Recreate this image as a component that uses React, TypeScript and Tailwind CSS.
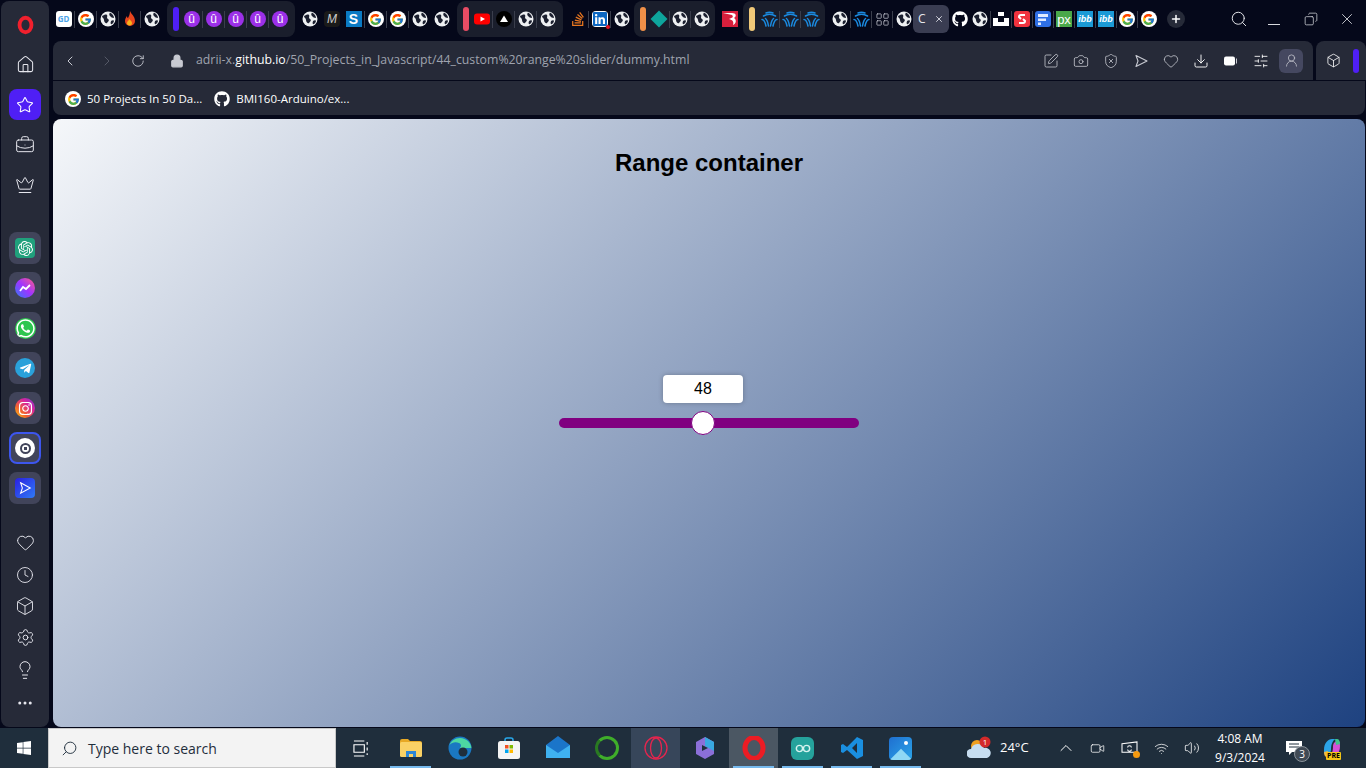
import type { ReactNode } from 'react';
import {
  House, Star, BriefcaseBusiness, Crown, Heart, Clock, Box, Settings, Lightbulb, Ellipsis,
  ChevronLeft, ChevronRight, ChevronUp, RotateCw, Lock, Search, X, Copy, SquarePen, Camera,
  ShieldX, Download, SlidersHorizontal, UserRound, LayoutGrid, Plus, Video, Wifi, Volume2,
} from 'lucide-react';
import { FcGoogle } from 'react-icons/fc';
import {
  FaGithub, FaWhatsapp, FaStackOverflow, FaWindows, FaTelegramPlane, FaInstagram, FaLinkedin,
} from 'react-icons/fa';
import { SiOpenai } from 'react-icons/si';

const ui = "font-['Open_Sans',sans-serif]";

function Globe() {
  return (
    <svg viewBox="0 0 16 16" className="w-4 h-4">
      <circle cx="8" cy="8" r="7.5" fill="#eef0f2" />
      <path fill="#1c2030" d="M2 5c2-1 4-2 5-1s-1 3 1 4 0 3-1 4-3-1-3-3-2-2-2-4zM10 1.500c2 1 4 3 4 5.500-2 0-3-1-4-2s-1-2 0-3.500zM11 10c1-1 3-1 3 0s-2 4-3 3 0-2 0-3z" />
    </svg>
  );
}

function G() {
  return (
    <span className="w-4 h-4 rounded-full bg-white flex items-center justify-center">
      <FcGoogle size={13} />
    </span>
  );
}

function Uicon() {
  return (
    <span className="w-4 h-4 rounded-full bg-[#9b30e8] flex items-center justify-center text-white text-[12px] leading-none font-['Liberation_Sans',sans-serif]">
      û
    </span>
  );
}

function Fan() {
  return (
    <svg viewBox="0 0 17 17" className="w-[17px] h-[17px]" fill="none" stroke="#1a8ae0" strokeWidth="1.500" strokeLinecap="round">
      <path d="M5 2q3.500-1.500 7 0M2.500 5q6-3.500 12 0M1 8.500q2.500 0 4 6.500M16 8.500q-2.500 0-4 6.500M4.500 7.500q2 1.500 3 7.500M12.500 7.500q-2 1.500-3 7.500" />
    </svg>
  );
}

function Tile({ className, children }: { className: string; children: ReactNode }) {
  return <span className={`w-4 h-4 flex items-center justify-center leading-none ${className}`}>{children}</span>;
}

function Slot({ children, w = 'w-[22px]', sep = true }: { children: ReactNode; w?: string; sep?: boolean }) {
  return (
    <div className={`${w} h-[17px] flex items-center justify-center shrink-0 ${sep ? 'border-r border-[#3a3e4c]' : ''}`}>
      {children}
    </div>
  );
}

function Group({ pill, ml, pr, children }: { pill: string; ml: string; pr: string; children: ReactNode }) {
  return (
    <div className={`h-[36px] rounded-lg bg-[#1a1e2c] flex items-center pl-[6px] shrink-0 ${ml} ${pr}`}>
      <span className={`w-[6px] h-6 rounded-full ${pill}`} />
      {children}
    </div>
  );
}

function TabStrip() {
  return (
    <div className="h-[41px] pb-[3px] flex items-center text-white shrink-0">
      <Slot><Tile className="bg-white rounded-[3px]"><span className="text-[#4da3e8] text-[8px] font-bold">GD</span></Tile></Slot>
      <Slot><G /></Slot>
      <Slot><Globe /></Slot>
      <Slot>
        <svg viewBox="0 0 16 16" className="w-4 h-4">
          <path fill="#e8451e" d="M8 0c1 3 5 5 5 10a5 5 0 0 1-10 0c0-2 1-4 2-5 0 2 1 2 1 2 1-2 2-4 2-7z" />
          <path fill="#f6b21b" d="M7 8c1 1 3 2 3 4a2.500 2.500 0 0 1-5 0c0-2 2-2 2-4z" />
        </svg>
      </Slot>
      <Slot sep={false}><Globe /></Slot>
      <Group pill="bg-[#4f1ff5] mr-[2px]" ml="ml-1" pr="pr-1">
        <Slot><Uicon /></Slot>
        <Slot><Uicon /></Slot>
        <Slot><Uicon /></Slot>
        <Slot><Uicon /></Slot>
        <Slot sep={false}><Uicon /></Slot>
      </Group>
      <div className="ml-1 flex items-center">
        <Slot sep={false}><Globe /></Slot>
        <Slot sep={false}><Tile className="bg-[#1a1a1a] rounded-sm"><span className="text-[#ccc] text-[12px] italic font-['Liberation_Sans',sans-serif]">M</span></Tile></Slot>
        <Slot><Tile className="bg-[#0b7ac4]"><span className="text-white text-[14px] font-bold font-['Liberation_Sans',sans-serif]">S</span></Tile></Slot>
        <Slot><G /></Slot>
        <Slot><G /></Slot>
        <Slot sep={false}><Globe /></Slot>
        <Slot sep={false}><Globe /></Slot>
      </div>
      <Group pill="bg-[#e84c64] mr-[2px]" ml="ml-1" pr="pr-1">
        <Slot>
          <svg viewBox="0 0 16 16" className="w-4 h-4">
            <rect y="2.500" width="16" height="11" rx="3" fill="#f00" />
            <path d="M6.500 5.500v5L11 8z" fill="#fff" />
          </svg>
        </Slot>
        <Slot>
          <svg viewBox="0 0 16 16" className="w-4 h-4">
            <circle cx="8" cy="8" r="8" fill="#000" />
            <path d="M8 4.500l4 6.500H4z" fill="#fff" />
          </svg>
        </Slot>
        <Slot><Globe /></Slot>
        <Slot sep={false}><Globe /></Slot>
      </Group>
      <div className="ml-1 flex items-center">
        <Slot><FaStackOverflow size={16} className="text-[#e8761f]" /></Slot>
        <Slot><span className="relative flex"><FaLinkedin size={16} className="text-[#0a66c2] bg-white rounded-sm" /><span className="absolute -right-0.5 -bottom-0.5 w-1 h-1 rounded-full bg-[#e01020]" /></span></Slot>
        <Slot w="w-[21px]" sep={false}><Globe /></Slot>
      </div>
      <Group pill="bg-[#f09048] mr-[2px]" ml="ml-[2px]" pr="pr-[3px]">
        <Slot><span className="w-3 h-3 rotate-45 bg-[#0ea59c]" /></Slot>
        <Slot w="w-[21px]"><Globe /></Slot>
        <Slot w="w-[21px]" sep={false}><Globe /></Slot>
      </Group>
      <div className="ml-1 flex items-center">
        <Slot sep={false}>
          <svg viewBox="0 0 16 16" className="w-4 h-4">
            <rect width="16" height="16" fill="#d81f3c" />
            <path d="M1 2h9c4 0 5 3 2 5 3 2 2 6-1 7 1-3 0-5-4-6 3-1 5-2 3-4z" fill="#fff" />
          </svg>
        </Slot>
      </div>
      <Group pill="bg-[#f0c878] mr-[4px]" ml="ml-[2px]" pr="pr-[3px]">
        <Slot w="w-[21px]"><Fan /></Slot>
        <Slot w="w-[21px]"><Fan /></Slot>
        <Slot w="w-[21px]" sep={false}><Fan /></Slot>
      </Group>
      <div className="ml-[5px] flex items-center">
        <Slot w="w-[21px]"><Globe /></Slot>
        <Slot w="w-[21px]"><Fan /></Slot>
        <Slot w="w-[21px]"><LayoutGrid size={15} strokeWidth={1.200} className="text-[#c4c6d0]" /></Slot>
        <Slot w="w-[21px]" sep={false}><Globe /></Slot>
      </div>
      <div className={`w-[36px] h-7 ml-[-1px] rounded-md bg-[#3a3d52] flex items-center justify-between px-[5px] text-[#e6e7ee] text-[12px] ${ui}`}>
        <span>C</span>
        <X size={10} />
      </div>
      <div className="flex items-center">
        <Slot w="w-[21px]" sep={false}><FaGithub size={16} className="text-white" /></Slot>
        <Slot w="w-[21px]"><Globe /></Slot>
        <Slot w="w-[21px]">
          <svg viewBox="0 0 16 16" className="w-4 h-4" fill="#fff"><path d="M5 1h6v4H5zM0 7h5v4h6V7h5v8H0z" /></svg>
        </Slot>
        <Slot w="w-[21px]">
          <svg viewBox="0 0 16 16" className="w-4 h-4">
            <rect width="16" height="16" rx="3" fill="#f0333f" />
            <path d="M11 4H7a2 2 0 0 0-2 2l2 2M5 12h4a2 2 0 0 0 2-2L9 8" fill="none" stroke="#fff" strokeWidth="2" />
          </svg>
        </Slot>
        <Slot w="w-[21px]">
          <svg viewBox="0 0 16 16" className="w-4 h-4">
            <rect width="16" height="16" rx="3" fill="#2f6fe4" />
            <path d="M3 3h10v3H3zM3 7.500h8v2.500H3zM3 11.500h3V14H3z" fill="#dfeaff" />
          </svg>
        </Slot>
        <Slot w="w-[21px]"><Tile className="bg-[#4aa84a]"><span className="text-white text-[13px] font-['Liberation_Sans',sans-serif]">px</span></Tile></Slot>
        <Slot w="w-[21px]"><Tile className="bg-[#1b9ad6]"><span className="text-white text-[9px] italic font-bold font-['Liberation_Sans',sans-serif]">ibb</span></Tile></Slot>
        <Slot w="w-[21px]"><Tile className="bg-[#1b9ad6]"><span className="text-white text-[9px] italic font-bold font-['Liberation_Sans',sans-serif]">ibb</span></Tile></Slot>
        <Slot w="w-[21px]"><G /></Slot>
        <Slot w="w-[21px]" sep={false}><G /></Slot>
      </div>
      <span className="ml-[8px] w-[18px] h-[18px] rounded-full bg-[#262a38] flex items-center justify-center">
        <Plus size={12} strokeWidth={3} />
      </span>
      <div className="flex-1" />
      <Search size={18} strokeWidth={1.300} className="mr-[20px] text-[#e4e5ea]" />
      <span className="w-3 h-px mr-[24px] bg-[#d8d9de] translate-y-[5px]" />
      <Copy size={14} strokeWidth={1.200} className="mr-[20px] text-[#e4e5ea] -scale-x-100" />
      <X size={18} strokeWidth={1.100} className="mr-[10px] text-[#e4e5ea]" />
    </div>
  );
}

function AddressBar() {
  return (
    <div className="h-[39px] flex gap-[3px] shrink-0 text-[#c8cad2]">
      <div className="w-[1260px] bg-[#262a38] rounded-t-lg flex items-center">
        <ChevronLeft size={16} strokeWidth={1.500} className="ml-[9px]" />
        <ChevronRight size={16} strokeWidth={1.500} className="ml-[21px] text-[#555967]" />
        <RotateCw size={14} strokeWidth={1.500} className="ml-[16px]" />
        <Lock size={14} fill="#c8cad2" className="ml-[25px] text-[#c8cad2]" />
        <p className={`ml-[12px] text-[12.300px] whitespace-nowrap text-[#9fa3ae] ${ui}`}>
          adrii-x.<span className="text-white">github.io</span>/50_Projects_in_Javascript/44_custom%20range%20slider/dummy.html
        </p>
        <div className="flex-1" />
        <div className="flex items-center gap-[14px]">
          <SquarePen size={16} strokeWidth={1.200} />
          <Camera size={16} strokeWidth={1.200} />
          <ShieldX size={16} strokeWidth={1.200} />
          <svg viewBox="0 0 16 16" className="w-4 h-4" fill="none" stroke="currentColor" strokeWidth="1.100" strokeLinejoin="round">
            <path d="M3 2.500L14 8 3 13.500 5 8z" />
          </svg>
          <Heart size={16} strokeWidth={1.200} />
          <Download size={16} strokeWidth={1.400} className="text-white" />
          <svg viewBox="0 0 16 16" className="w-4 h-4">
            <rect x="1" y="3.500" width="11" height="9" rx="2" fill="#fff" />
            <path d="M13 5.500h1v5h-1z" fill="#c8cad2" />
          </svg>
          <SlidersHorizontal size={16} strokeWidth={1.300} className="text-white" />
        </div>
        <div className="w-6 h-6 ml-[10px] mr-[10px] rounded-md bg-[#454860] flex items-center justify-center">
          <UserRound size={15} strokeWidth={1.200} />
        </div>
      </div>
      <div className="flex-1 bg-[#262a38] rounded-t-lg flex items-center pl-[10px]">
        <Box size={15} strokeWidth={1.300} className="text-white" />
        <span className="ml-[12px] w-[6px] h-6 rounded-full bg-[#4f1ff5]" />
      </div>
    </div>
  );
}

function Bookmarks() {
  return (
    <div className={`mt-px h-[34px] pt-[2px] mr-px bg-[#262a38] rounded-b-lg flex items-center pl-3 text-[11.500px] text-white shrink-0 ${ui}`}>
      <span className="w-4 h-4 rounded-full bg-white flex items-center justify-center"><FcGoogle size={13} /></span>
      <span className="ml-[6px]">50 Projects In 50 Da...</span>
      <FaGithub size={16} className="ml-[12px]" />
      <span className="ml-[6px]">BMI160-Arduino/ex...</span>
    </div>
  );
}

function RangeSlider() {
  const value = 48;
  return (
    <div className="relative w-[300px] h-[10px] rounded-[5px] bg-[#800080]">
      <div
        className="absolute bottom-[25px] w-20 h-7 -translate-x-1/2 rounded bg-white shadow-[0_0_5px_rgba(0,0,0,0.25)] flex items-center justify-center text-base text-black"
        style={{ left: `${value}%` }}
      >
        {value}
      </div>
      <div
        className="absolute top-1/2 w-6 h-6 -translate-x-1/2 -translate-y-1/2 rounded-full bg-white border border-[#800080]"
        style={{ left: `${value}%` }}
      />
    </div>
  );
}

function Page() {
  return (
    <main className="flex-1 mt-1 mr-px rounded-lg bg-[linear-gradient(135deg,#f5f7fa,#1e4280)] grid grid-rows-[1fr_auto_1fr] justify-items-center font-['Liberation_Sans',sans-serif]">
      <h1 className="pt-[30px] text-2xl leading-7 font-bold text-black">Range container</h1>
      <RangeSlider />
      <div />
    </main>
  );
}

function SideTile({ children, className = '' }: { children: ReactNode; className?: string }) {
  return <div className={`w-8 h-8 rounded-lg bg-[#41445a] flex items-center justify-center shrink-0 ${className}`}>{children}</div>;
}

function Sidebar() {
  const line = 'text-[#e6e7ee] shrink-0';
  return (
    <aside className="w-[48px] h-[726px] mt-px ml-px mr-[4px] bg-[#262a38] rounded-lg flex flex-col items-center shrink-0">
      <svg viewBox="0 0 20 20" className="w-[17px] h-[20px] mt-[14px] shrink-0">
        <ellipse cx="10" cy="10" rx="7" ry="8.500" fill="none" stroke="#f0202d" strokeWidth="4.500" />
      </svg>
      <House size={19} strokeWidth={1.300} className={`${line} mt-[20px]`} />
      <div className="w-8 h-[31px] mt-[15px] rounded-lg bg-[#4f1ff5] flex items-center justify-center shrink-0">
        <Star size={18} strokeWidth={1.400} className="text-white" />
      </div>
      <BriefcaseBusiness size={20} strokeWidth={1.200} className={`${line} mt-[15px]`} />
      <Crown size={20} strokeWidth={1.200} className={`${line} mt-[20px]`} />
      <SideTile className="mt-[37px]">
        <span className="w-5 h-5 rounded bg-[#20a07c] flex items-center justify-center"><SiOpenai size={15} className="text-white" /></span>
      </SideTile>
      <SideTile className="mt-2">
        <span className="w-5 h-5 rounded-full bg-[linear-gradient(45deg,#2f7bf6,#a033ff,#ff5c87)] flex items-center justify-center">
          <svg viewBox="0 0 12 8" className="w-3 h-2" fill="none" stroke="#fff" strokeWidth="1.800"><path d="M1 7l3-4 3 2 4-4" /></svg>
        </span>
      </SideTile>
      <SideTile className="mt-2">
        <FaWhatsapp size={21} className="text-white bg-[#2dc64f] rounded-full" />
      </SideTile>
      <SideTile className="mt-2">
        <span className="w-5 h-5 rounded-full bg-[#2aa1da] flex items-center justify-center"><FaTelegramPlane size={13} className="text-white" /></span>
      </SideTile>
      <SideTile className="mt-2">
        <span className="w-5 h-5 rounded-full bg-[linear-gradient(45deg,#fdc70c,#f3632f,#d6249f,#7a3bd6)] flex items-center justify-center"><FaInstagram size={15} className="text-white" /></span>
      </SideTile>
      <SideTile className="mt-2 border-2 border-[#3d56ee]">
        <span className="w-5 h-5 rounded-full bg-white flex items-center justify-center">
          <span className="w-[11px] h-[11px] rounded-full border-2 border-[#41445a] flex items-center justify-center"><span className="w-[3px] h-[3px] bg-[#41445a]" /></span>
        </span>
      </SideTile>
      <SideTile className="mt-2">
        <span className="w-5 h-5 rounded bg-[linear-gradient(135deg,#2a1fe0,#2f7bf6)] flex items-center justify-center">
          <svg viewBox="0 0 16 16" className="w-3.5 h-3.5" fill="none" stroke="#fff" strokeWidth="1.200"><path d="M3 2l11 6-11 6 2-6z" /></svg>
        </span>
      </SideTile>
      <Heart size={19} strokeWidth={1.200} className={`${line} mt-[29px]`} />
      <Clock size={18} strokeWidth={1.200} className={`${line} mt-[14px]`} />
      <Box size={20} strokeWidth={1.100} className={`${line} mt-[12px]`} />
      <Settings size={19} strokeWidth={1.200} className={`${line} mt-[12px]`} />
      <Lightbulb size={20} strokeWidth={1.200} className={`${line} mt-[13px]`} />
      <Ellipsis size={18} className={`${line} mt-[14px]`} />
    </aside>
  );
}

function TaskIcon({ children, w = 'w-[49px]', active = '', open = false }: { children: ReactNode; w?: string; active?: string; open?: boolean }) {
  return (
    <div className={`relative h-10 flex items-center justify-center shrink-0 ${w} ${active}`}>
      {children}
      {open && <span className="absolute bottom-0 inset-x-1 h-[2px] bg-[#76b9ed]" />}
    </div>
  );
}

function Taskbar() {
  return (
    <footer className={`h-10 bg-[#1f2e3c] flex items-center text-white shrink-0 ${ui}`}>
      <div className="w-[48px] flex justify-center"><FaWindows size={16} /></div>
      <div className="w-[288px] h-10 bg-[#f3f3f3] border border-[#c8c8c8] flex items-center text-[#1f2e3c] text-[14px]">
        <Search size={17} strokeWidth={1.300} className="ml-[12px] -scale-x-100" />
        <span className="ml-[10px]">Type here to search</span>
      </div>
      <TaskIcon w="w-[50px]">
        <svg viewBox="0 0 18 18" className="w-[17px] h-[17px]" fill="none" stroke="#fff" strokeWidth="1.200">
          <path d="M1 1h11M1 17h11M1 5h11v8H1zM15 2v3M15 8v3M15 14v2" />
        </svg>
      </TaskIcon>
      <TaskIcon open>
        <svg viewBox="0 0 22 20" className="w-[22px] h-[20px]">
          <path d="M0 3a2 2 0 0 1 2-2h6l2 2h10a2 2 0 0 1 2 2v1H0z" fill="#e8a925" />
          <rect y="4" width="22" height="15" rx="1.500" fill="#fad165" />
          <path d="M6 19v-6h10v6h-3v-3H9v3z" fill="#2d86d6" />
        </svg>
      </TaskIcon>
      <TaskIcon>
        <svg viewBox="0 0 24 24" className="w-6 h-6">
          <circle cx="12" cy="12" r="11.500" fill="#1a78c2" />
          <path d="M23.500 13c0-6-5-11-11.500-11C7 2 3 5 1.500 9 4 6 8 5.500 11 7c3 1.500 2 4 1 5h11.500z" fill="#4dd8a2" />
          <circle cx="15" cy="16" r="4.500" fill="#1f2e3c" />
        </svg>
      </TaskIcon>
      <TaskIcon>
        <svg viewBox="0 0 24 24" className="w-6 h-6">
          <path d="M8 6V4a2 2 0 0 1 2-2h4a2 2 0 0 1 2 2v2" fill="none" stroke="#28a8ea" strokeWidth="1.500" />
          <rect x="1" y="5" width="22" height="18" rx="2.500" fill="#f4f4f4" />
          <rect x="8" y="9" width="3.500" height="3.500" fill="#f25022" />
          <rect x="12.500" y="9" width="3.500" height="3.500" fill="#7fba00" />
          <rect x="8" y="13.500" width="3.500" height="3.500" fill="#00a4ef" />
          <rect x="12.500" y="13.500" width="3.500" height="3.500" fill="#ffb900" />
        </svg>
      </TaskIcon>
      <TaskIcon>
        <svg viewBox="0 0 24 24" className="w-6 h-6">
          <path d="M0 9L12 0l12 9v13H0z" fill="#1b75c9" />
          <path d="M0 9l12 8 12-8v13H0z" fill="#3fb1f0" />
        </svg>
      </TaskIcon>
      <TaskIcon>
        <span className="w-6 h-6 rounded-full border-[3px] border-[#3fae2a] border-l-[#2a7a22]" />
      </TaskIcon>
      <TaskIcon active="bg-[#37465a]">
        <svg viewBox="0 0 24 24" className="w-6 h-6" fill="none" stroke="#e6254e" strokeWidth="1.300">
          <circle cx="12" cy="12" r="11" />
          <ellipse cx="12" cy="12" rx="5.500" ry="10" />
        </svg>
      </TaskIcon>
      <TaskIcon>
        <svg viewBox="0 0 24 24" className="w-6 h-6">
          <path d="M12 1l9 5v12l-9 5-9-5V6z" fill="#8b6fd8" />
          <path d="M12 1l9 5v9l-9-5z" fill="#38a8e0" />
          <path d="M9 9l6 3-6 3z" fill="#1f2e3c" />
        </svg>
      </TaskIcon>
      <TaskIcon active="bg-[#4b5763]" open>
        <svg viewBox="0 0 24 24" className="w-6 h-6">
          <ellipse cx="12" cy="12" rx="9" ry="10.500" fill="none" stroke="#ec1c24" strokeWidth="5" />
        </svg>
      </TaskIcon>
      <TaskIcon open>
        <span className="w-[23px] h-[23px] rounded-md bg-[#25a29c] flex items-center justify-center">
          <svg viewBox="0 0 18 10" className="w-4 h-[9px]" fill="none" stroke="#d6f2ef" strokeWidth="1.600">
            <circle cx="5" cy="5" r="3.500" />
            <circle cx="13" cy="5" r="3.500" />
          </svg>
        </span>
      </TaskIcon>
      <TaskIcon open>
        <svg viewBox="0 0 24 24" className="w-6 h-6">
          <path d="M17 1l6 3v16l-6 3-10-9-4 3-2-1V9l2-1 4 3zm0 6l-5 5 5 5z" fill="#1a8fe0" fillRule="evenodd" />
        </svg>
      </TaskIcon>
      <TaskIcon open>
        <span className="relative w-[23px] h-[23px] rounded-sm bg-[linear-gradient(135deg,#1f6fd0,#2ba4e8)] overflow-hidden">
          <span className="absolute right-1 top-1 w-1 h-1 rounded-full bg-white" />
          <span className="absolute left-1 -bottom-2 w-4 h-4 rotate-45 bg-[#8fd8f5]" />
        </span>
      </TaskIcon>
      <div className="flex-1" />
      <svg viewBox="0 0 26 26" className="w-[26px] h-[26px] shrink-0 mr-px">
        <circle cx="10" cy="11" r="6" fill="#f0a020" />
        <path d="M4 23a4.500 4.500 0 0 1 0-9 7 7 0 0 1 13-1 5 5 0 0 1 3 10z" fill="#c6ddf0" />
        <circle cx="18" cy="7" r="5.500" fill="#d42a2a" />
        <text x="18" y="10" fontSize="8" textAnchor="middle" fill="#fff">1</text>
      </svg>
      <span className="ml-[6px] w-[50px] text-[13px]">24°C</span>
      <TaskIcon w="w-[31px]"><ChevronUp size={20} strokeWidth={1.200} /></TaskIcon>
      <TaskIcon w="w-[32px]"><Video size={15} strokeWidth={1.200} /></TaskIcon>
      <TaskIcon w="w-[32px]">
        <span className="relative flex">
          <svg viewBox="0 0 18 16" className="w-[17px] h-[15px]" fill="none" stroke="#fff" strokeWidth="1.100"><path d="M1 3l16-2v11H1zM7 7a2 2 0 0 1 4 0M11 9a2 2 0 0 1-4 0" /></svg>
          <span className="absolute -right-0.5 -bottom-0.5 w-[7px] h-[7px] rounded-full bg-[#f59a10]" />
        </span>
      </TaskIcon>
      <TaskIcon w="w-[32px]"><Wifi size={15} strokeWidth={1.200} /></TaskIcon>
      <TaskIcon w="w-[30px]"><Volume2 size={16} strokeWidth={1.200} /></TaskIcon>
      <div className="w-[56px] ml-[5px] text-[12px] leading-[19px] text-center whitespace-nowrap">
        <p>4:08 AM</p>
        <p>9/3/2024</p>
      </div>
      <TaskIcon w="w-[40px]" active="ml-[6px]">
        <span className="relative flex">
          <svg viewBox="0 0 16 14" className="w-4 h-[14px]"><path d="M0 0h16v11H6l-3 3v-3H0z" fill="#fff" /><path d="M3 3h10M3 6h10" stroke="#1f2e3c" /></svg>
          <span className="absolute -right-2 top-[5px] w-4 h-4 rounded-full bg-[#404a55] border border-[#8a929a] flex items-center justify-center text-[10px] leading-none">3</span>
        </span>
      </TaskIcon>
      <TaskIcon w="w-[36px]">
        <span className="relative flex">
          <svg viewBox="0 0 20 20" className="w-5 h-5">
            <path d="M2 12C2 5 6 1 10 1h5c-4 0-6 5-6 10s-3 6-5 6-2-3-2-5z" fill="#2ba4e8" />
            <path d="M18 8c0 7-4 11-8 11H5c4 0 6-5 6-10s3-6 5-6 2 3 2 5z" fill="#d44fd6" />
            <path d="M13 1h2c2 0 3 2 3 5l-4 1z" fill="#3fc48a" />
            <path d="M2 14l4-1-1 6c-2 0-3-2-3-5z" fill="#f5b942" />
          </svg>
          <span className="absolute left-1 -bottom-0.5 px-px rounded-[1px] bg-[#f5c518] text-black text-[7px] leading-[8px] font-bold">PRE</span>
        </span>
      </TaskIcon>
      <div className="w-[16px]" />
    </footer>
  );
}

export default function App() {
  return (
    <div className="w-[1366px] h-[768px] overflow-hidden bg-[#05081a] flex flex-col">
      <div className="flex-1 flex min-h-0">
        <Sidebar />
        <div className="flex-1 flex flex-col min-w-0 mb-px">
          <TabStrip />
          <AddressBar />
          <Bookmarks />
          <Page />
        </div>
      </div>
      <Taskbar />
    </div>
  );
}
